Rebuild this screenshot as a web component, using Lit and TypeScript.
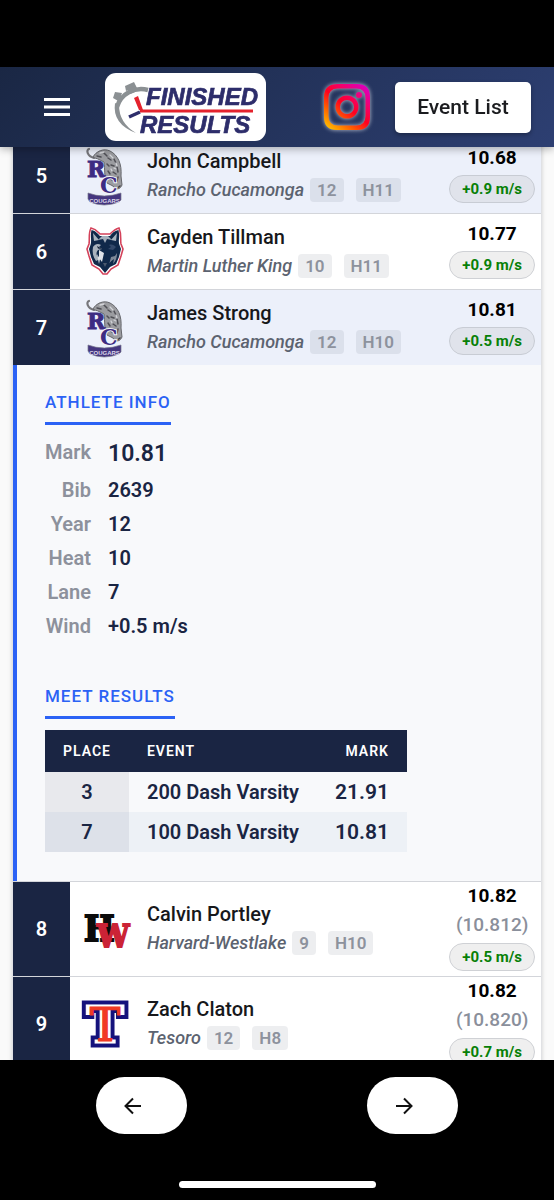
import { LitElement, html, svg, css, nothing } from "lit";
import { customElement, property } from "lit/decorators.js";

interface Result {
  place: number;
  name: string;
  school: string;
  year: string;
  heat: string;
  mark: string;
  exact?: string;
  wind: string;
  logo: "cougars" | "wolf" | "hw" | "tesoro";
  open?: boolean;
}

const RESULTS: Result[] = [
  { place: 5, name: "John Campbell", school: "Rancho Cucamonga", year: "12", heat: "H11", mark: "10.68", wind: "+0.9 m/s", logo: "cougars" },
  { place: 6, name: "Cayden Tillman", school: "Martin Luther King", year: "10", heat: "H11", mark: "10.77", wind: "+0.9 m/s", logo: "wolf" },
  { place: 7, name: "James Strong", school: "Rancho Cucamonga", year: "12", heat: "H10", mark: "10.81", wind: "+0.5 m/s", logo: "cougars", open: true },
  { place: 8, name: "Calvin Portley", school: "Harvard-Westlake", year: "9", heat: "H10", mark: "10.82", exact: "(10.812)", wind: "+0.5 m/s", logo: "hw" },
  { place: 9, name: "Zach Claton", school: "Tesoro", year: "12", heat: "H8", mark: "10.82", exact: "(10.820)", wind: "+0.7 m/s", logo: "tesoro" },
];

const INFO = [
  ["Mark", "10.81"],
  ["Bib", "2639"],
  ["Year", "12"],
  ["Heat", "10"],
  ["Lane", "7"],
  ["Wind", "+0.5 m/s"],
];

const MEET = [
  ["3", "200 Dash Varsity", "21.91"],
  ["7", "100 Dash Varsity", "10.81"],
];

const LOGOS = {
  cougars: svg`
    <g stroke-linecap="round" fill="none">
      <path d="M14 11C7 9 6 3 9 2" stroke="#77777b" stroke-width="2.200"/>
      <path d="M13 10C16 4 24 1 30 4C38 8 42 17 41 29L42 38C40 43 35 43 33 39L27 36C24 30 25 22 24 15L18 12Z" fill="#9b9ca0" stroke="#66676c"/>
      <path d="M17 9l4 1M24 6l3 3M28 11l3 2M34 12l2 4M31 18l3 1M37 20l1 5M33 25l3 2M38 30l-1 4M28 24l2 3M29 31l3 2M27 17l2 2" stroke="#4f4f55" stroke-width="1.500"/>
      <path d="M20 6l4 -1M30 8l3 3M34 21l2 1M36 16l1 3M31 22l1 2M34 32l2 3" stroke="#d3d4d8" stroke-width="1.300"/>
      <path d="M36 42l4 -3" stroke="#3d3d42" stroke-width="1.500"/>
    </g>
    <text class="slab" x="7" y="30" font-size="22" fill="#3d2c82" stroke="#3d2c82" stroke-width="1">R</text>
    <text class="slab" x="20" y="46" font-size="22" fill="#3d2c82" stroke="#f1f2fa" stroke-width="2" paint-order="stroke">C</text>
    <path d="M8 46Q24 52 41 46L41 53L39 55Q24 61 10 55L8 52Z" fill="#45367f" stroke="#77758c" stroke-width=".7"/>
    <text class="sans" x="24.500" y="55.500" font-size="6" text-anchor="middle" fill="#dcd8ea">COUGARS</text>`,
  wolf: svg`
    <path d="M11 5C16 6 18 9 20 11H30C32 9 35 6 39 5C42 12 40 17 41 21L43 26L41 33L38 42L31 46L27 51H23L19 46L12 42L9 33L7 26L9 21C10 16 8 11 11 5Z" fill="#fff" stroke="#d4425a" stroke-width="1.600"/>
    <path d="M11.500 7C16 8 18 11 20 13H30C32 10 34 8 38.500 7C40 14 38 18 39.500 22L41 26L39 34L36 41L30 44L25 50L20 44L14 41L11 34L9 26L10.500 22C12 18 10 13 11.500 7Z" fill="#10294a"/>
    <path d="M13 10L19 17L14 18ZM37 10L31 17L36 18Z" fill="#aab4bf"/>
    <path d="M18 17L22 13H28L32 17L27 16L25 20L23 16Z" fill="#a4aeba"/>
    <path d="M13 24C15 21 18 20 21 22L19 24L22 26L18 27C15 30 17 34 20 36L16 38C13 34 12 29 13 24Z" fill="#a9b3be"/>
    <path d="M37 30C37 34 36 38 33 41L34 36C31 38 29 40 29 42L31 34L35 33Z" fill="#7d8998"/>
    <path d="M36 24C34 22 32 21 29 22L31 24L28 26L33 27Z" fill="#33496a"/>
    <path d="M19 27L24 30L22 39L19 35ZM17 31L20 36L19 41Z" fill="#dfe3e8"/>
    <path d="M17 23l5 3-4-.5z" fill="#0a1930"/>
    <path d="M23 40h4l-2 4z" fill="#49586d"/>`,
  hw: svg`
    <text class="narrow" x="4" y="41" font-size="36" fill="#0b0b0b" stroke="#0b0b0b" stroke-width="2">H</text>
    <text class="narrow" x="17" y="47" font-size="32" fill="#cb2336" stroke="#cb2336" stroke-width="2">W</text>`,
  tesoro: svg`
    <text class="slab" text-anchor="middle" font-size="52" x="25" y="48" fill="#15127c" stroke="#15127c" stroke-width="9">T</text>
    <text class="slab" text-anchor="middle" font-size="52" x="25" y="48" fill="#fff" stroke="#fff" stroke-width="1">T</text>
    <text class="thin" text-anchor="middle" font-size="46" x="25" y="46" fill="#f13a24" stroke="#f13a24" stroke-width="1">T</text>`,
};

@customElement("team-logo")
class TeamLogo extends LitElement {
  @property() kind: keyof typeof LOGOS = "wolf";

  static styles = css`
    :host { display: block; }
    .art { display: block; width: 50px; height: 58px; overflow: visible; }
    .slab { font-family: "DejaVu Serif", serif; font-weight: 700; }
    .narrow { font-family: "DejaVu Serif Condensed", "Liberation Serif", serif; font-weight: 700; }
    .thin { font-family: "DejaVu Serif", serif; font-weight: 400; }
    .sans { font-family: "Liberation Sans", sans-serif; font-weight: 700; }
  `;

  render() {
    return html`<svg class="art" viewBox="0 0 50 58" aria-hidden="true">${LOGOS[this.kind]}</svg>`;
  }
}

@customElement("athlete-detail")
class AthleteDetail extends LitElement {
  static styles = css`
    :host {
      display: block;
      border-left: 4px solid #2b62f5;
      background: #f8f9fb;
      padding: 24px 28px 29px;
      color: #1a2543;
    }
    .title {
      display: table;
      margin: 0 0 10px;
      border-bottom: 3px solid #2b62f5;
      padding-bottom: 6px;
      font-size: 17px;
      font-weight: 500;
      line-height: 27px;
      letter-spacing: 1px;
      color: #2b62f5;
      text-transform: uppercase;
    }
    .info {
      display: grid;
      grid-template-columns: auto 1fr;
      column-gap: 17px;
      margin: 0 0 40px;
      font-size: 20px;
      font-weight: 600;
      line-height: 34px;
    }
    .term { color: #8d919c; text-align: right; }
    .value { margin: 0; }
    .lead { font-size: 23px; line-height: 38px; }
    .meet {
      margin-top: 11px;
      border-collapse: collapse;
      font-size: 20px;
      font-weight: 600;
      line-height: 24px;
    }
    .meet th {
      padding: 9px 18px;
      background: #1a2543;
      color: #fff;
      font-size: 14px;
      font-weight: 600;
      letter-spacing: 1px;
      text-align: left;
      text-transform: uppercase;
    }
    .meet td { padding: 8px 18px; }
    .meet .place { text-align: center; background: #e8e9ed; }
    .meet .mark { text-align: right; font-size: 21px; }
    .meet tr:nth-child(even) td { background: #edf1f6; }
    .meet tr:nth-child(even) .place { background: #dde1e9; }
    .meet th.end { text-align: right; }
  `;

  render() {
    return html`
      <h3 class="title">Athlete Info</h3>
      <dl class="info">
        ${INFO.map(([term, value], i) => html`
          <dt class="term">${term}</dt>
          <dd class="value ${i === 0 ? "lead" : ""}">${value}</dd>`)}
      </dl>
      <h3 class="title">Meet Results</h3>
      <table class="meet">
        <thead><tr><th>Place</th><th>Event</th><th class="end">Mark</th></tr></thead>
        <tbody>
          ${MEET.map(([place, event, mark]) => html`
            <tr><td class="place">${place}</td><td>${event}</td><td class="mark">${mark}</td></tr>`)}
        </tbody>
      </table>
    `;
  }
}

@customElement("result-row")
class ResultRow extends LitElement {
  @property({ attribute: false }) result!: Result;

  static styles = css`
    :host { display: block; border-bottom: 1px solid #d3d5da; }
    .row {
      display: grid;
      grid-template-columns: 57px 70px 1fr auto;
      min-height: 75px;
      background: #fff;
    }
    .tint { background: #ecf0fa; }
    .rank {
      display: grid;
      place-items: center;
      background: #1a2543;
      color: #fff;
      font-size: 20px;
      font-weight: 600;
    }
    .logo { display: grid; place-items: center; }
    .who { align-self: center; padding-left: 7px; }
    .name { font-size: 20px; font-weight: 500; line-height: 28px; color: #17181b; }
    .club {
      display: flex;
      align-items: center;
      gap: 6px;
      font-size: 18px;
      line-height: 30px;
      color: #5c6370;
    }
    .school { font-style: italic; font-weight: 500; }
    .tag {
      margin-right: 6px;
      border-radius: 4px;
      padding: 0 7px;
      background: rgba(26, 37, 67, 0.08);
      color: #8d929d;
      font-size: 17px;
      font-weight: 600;
      line-height: 24px;
    }
    .score {
      display: flex;
      flex-direction: column;
      align-items: center;
      align-self: center;
      padding: 0 6px;
    }
    .mark { font-size: 19px; font-weight: 700; line-height: 28px; color: #000; }
    .exact { font-size: 19px; font-weight: 500; line-height: 30px; color: #8a8f9b; }
    .wind {
      margin: 3px 0 5px;
      border: 1px solid #cfd1d5;
      border-radius: 14px;
      padding: 0 12px;
      background: #efefef;
      color: #078007;
      font-size: 15px;
      font-weight: 700;
      line-height: 26px;
    }
    .tint .wind { background: #e0e3eb; border-color: #c8ccd4; }
  `;

  render() {
    const r = this.result;
    const tint = r.place === 5 || r.place === 7;
    return html`
      <div class="row ${tint ? "tint" : ""}">
        <div class="rank">${r.place}</div>
        <div class="logo"><team-logo kind=${r.logo}></team-logo></div>
        <div class="who">
          <div class="name">${r.name}</div>
          <div class="club">
            <span class="school">${r.school}</span>
            <span class="tag">${r.year}</span>
            <span class="tag">${r.heat}</span>
          </div>
        </div>
        <div class="score">
          <div class="mark">${r.mark}</div>
          ${r.exact ? html`<div class="exact">${r.exact}</div>` : nothing}
          <div class="wind">${r.wind}</div>
        </div>
      </div>
      ${r.open ? html`<athlete-detail></athlete-detail>` : nothing}
    `;
  }
}

@customElement("app-root")
class AppRoot extends LitElement {
  static styles = css`
    :host {
      display: flex;
      flex-direction: column;
      height: 100vh;
      background: #000;
      font-family: Roboto, "Liberation Sans", sans-serif;
    }
    .status { height: 67px; flex: none; }
    .bar {
      position: relative;
      display: flex;
      flex: none;
      align-items: center;
      height: 80px;
      box-sizing: border-box;
      padding: 0 23px 0 39px;
      background: linear-gradient(135deg, #1a2744, #2d3f72);
      box-shadow: 0 2px 8px rgba(0, 0, 0, 0.3);
    }
    .menu { display: block; width: 36px; height: 36px; border: 0; padding: 0; background: none; }
    .brand { display: block; margin-left: 30px; width: 161px; height: 68px; border-radius: 11px; background: #fff; }
    .brand-word { font-family: "Liberation Sans", sans-serif; font-weight: 700; font-style: italic; }
    .social { margin-left: auto; margin-right: 21px; width: 54px; height: 54px; }
    .glow { filter: drop-shadow(0 0 2px rgba(255, 255, 255, 0.7)); }
    svg { display: block; }
    .events {
      width: 136px;
      height: 51px;
      border: 0;
      border-radius: 5px;
      padding: 0;
      background: #fff;
      box-shadow: 0 2px 4px rgba(0, 0, 0, 0.3);
      color: #1b1c1f;
      font: 500 21px Roboto, "Liberation Sans", sans-serif;
    }
    .scroll {
      flex: 1;
      min-height: 0;
      overflow-y: auto;
      scrollbar-width: none;
      background: #fafafa;
    }
    .list { margin: 0 13px; box-shadow: 0 0 0 1px #e0e1e4, 0 0 5px rgba(0, 0, 0, 0.25); }
    .dock { display: flex; flex: none; justify-content: space-between; padding: 17px 96px 47px; }
    .nav {
      width: 91px;
      height: 57px;
      border: 0;
      border-radius: 29px;
      padding: 0 0 0 27px;
      background: #fff;
    }
    .home { flex: none; width: 197px; height: 7px; margin: 0 auto 12px; border-radius: 4px; background: #fff; }
  `;

  firstUpdated() {
    const scroll = this.renderRoot.querySelector(".scroll")!;
    requestAnimationFrame(() => { scroll.scrollTop = 9; });
  }

  render() {
    return html`
      <div class="status"></div>
      <header class="bar">
        <button class="menu" aria-label="Menu">
          <svg width="36" height="36" viewBox="0 0 36 36"><path d="M5 10.500h26M5 18h26M5 25.500h26" stroke="#fff" stroke-width="3"/></svg>
        </button>
        <a class="brand" href="#" aria-label="Finished Results">
          <svg width="161" height="68" viewBox="0 0 161 68">
            <path d="M43 17A25 24 0 0 0 12 34" fill="none" stroke="#8b9093" stroke-width="4.500"/>
            <path d="M10 30Q7 51 31 60Q14 50 14 32Z" fill="#8b9093"/>
            <path d="M20 13l9-4 3 6-3 1 1 3-5 2-1-4-3 1zM8 25l2-6 7 1-1 3 3 1-4 5z" fill="#8b9093"/>
            <path d="M29 25l4-2 5 14h-4z" fill="#e4222d"/>
            <path d="M35 39l-11 5" stroke="#2d2d6b" stroke-width="3.500"/>
            <path d="M35 38H148" stroke="#e4222d" stroke-width="3"/>
            <g class="brand-word" fill="#2d2d6b" stroke="#2d2d6b" stroke-width=".7">
              <text x="41" y="32" font-size="24">FINISHED</text>
              <text x="35" y="60" font-size="24">RESULTS</text>
            </g>
          </svg>
        </a>
        <a class="social" href="#" aria-label="Instagram">
          <svg class="glow" width="54" height="54" viewBox="0 0 54 54">
            <defs>
              <linearGradient id="ig" x1="0.1" y1="1" x2="0.9" y2="0">
                <stop offset="0" stop-color="#ffc400"/>
                <stop offset=".28" stop-color="#ff5a00"/>
                <stop offset=".5" stop-color="#ff0020"/>
                <stop offset=".72" stop-color="#f5006a"/>
                <stop offset="1" stop-color="#d800c8"/>
              </linearGradient>
            </defs>
            <path fill="url(#ig)" fill-rule="evenodd" d="M18 4H37Q50 4 50 17V37Q50 50 37 50H17Q4 50 4 37V17Q4 4 18 4ZM18 8.500Q8.500 8.500 8.500 18V36Q8.500 45.500 18 45.500H36Q45.500 45.500 45.500 36V18Q45.500 8.500 36 8.500ZM27 15.500A11.500 11.500 0 1 1 27 38.500A11.500 11.500 0 1 1 27 15.500ZM27 20A7 7 0 1 0 27 34A7 7 0 1 0 27 20ZM39 12a3 3 0 1 1 0 6a3 3 0 1 1 0-6Z"/>
          </svg>
        </a>
        <button class="events">Event List</button>
      </header>
      <main class="scroll">
        <div class="list">${RESULTS.map((r) => html`<result-row .result=${r}></result-row>`)}</div>
      </main>
      <nav class="dock">
        <button class="nav" aria-label="Back">
          <svg width="20" height="20" viewBox="0 0 20 20" fill="none" stroke="#111" stroke-width="2"><path d="M18 10H3M10 2.500L2.500 10L10 17.500"/></svg>
        </button>
        <button class="nav" aria-label="Forward">
          <svg width="20" height="20" viewBox="0 0 20 20" fill="none" stroke="#111" stroke-width="2"><path d="M2 10H17M10 2.500L17.500 10L10 17.500"/></svg>
        </button>
      </nav>
      <div class="home"></div>
    `;
  }
}
